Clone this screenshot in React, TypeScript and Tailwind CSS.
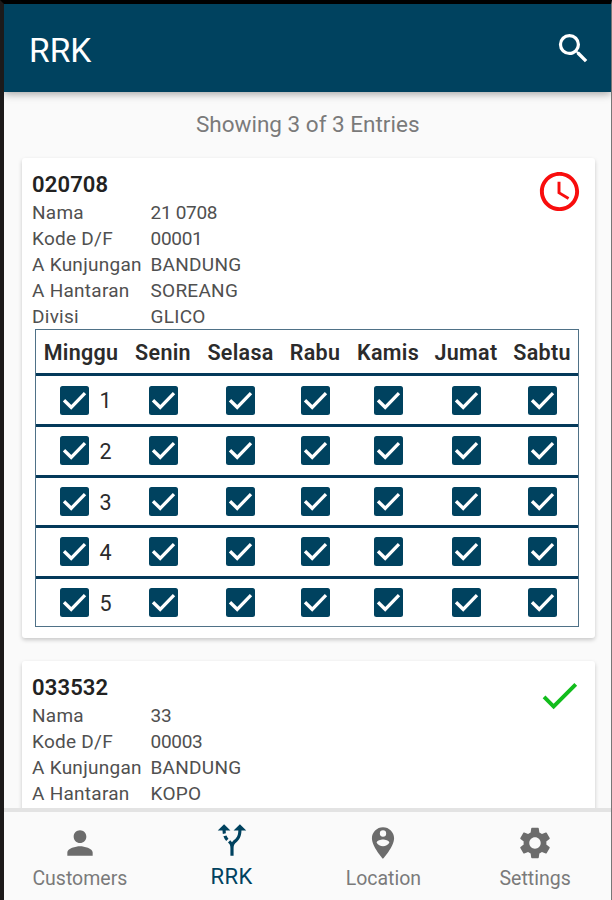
import {
  MdAccessTime,
  MdAltRoute,
  MdCheck,
  MdPerson,
  MdPersonPinCircle,
  MdSearch,
  MdSettings,
} from "react-icons/md";

const days = ["Senin", "Selasa", "Rabu", "Kamis", "Jumat", "Sabtu"];
const weeks = [1, 2, 3, 4, 5];

interface Customer {
  code: string;
  status: "pending" | "done";
  fields: [string, string][];
}

const customers: Customer[] = [
  {
    code: "020708",
    status: "pending",
    fields: [
      ["Nama", "21 0708"],
      ["Kode D/F", "00001"],
      ["A Kunjungan", "BANDUNG"],
      ["A Hantaran", "SOREANG"],
      ["Divisi", "GLICO"],
    ],
  },
  {
    code: "033532",
    status: "done",
    fields: [
      ["Nama", "33"],
      ["Kode D/F", "00003"],
      ["A Kunjungan", "BANDUNG"],
      ["A Hantaran", "KOPO"],
    ],
  },
];

const tabs = [
  { label: "Customers", icon: MdPerson },
  { label: "RRK", icon: MdAltRoute, active: true },
  { label: "Location", icon: MdPersonPinCircle },
  { label: "Settings", icon: MdSettings },
];

function Checkbox() {
  return (
    <svg viewBox="0 0 29 29" className="size-[29px] shrink-0">
      <rect width="29" height="29" rx="2.5" fill="#00425f" />
      <path d="M4 14.3l7.2 7L25 7.2" fill="none" stroke="#fff" strokeWidth="3.3" />
    </svg>
  );
}

function Schedule() {
  return (
    <div className="ml-[13.5px] w-[544px] border border-[#4f7187] text-[#2b2b2b]">
      <div className="grid h-[43px] grid-cols-[90px_74px_81px_68px_78px_78px_74px] items-center pt-[3px] text-center text-[21.5px] font-semibold tracking-[0.3px]">
        <span>Minggu</span>
        {days.map((day) => (
          <span key={day}>{day}</span>
        ))}
      </div>
      {weeks.map((week) => (
        <div
          key={week}
          className="grid h-[50.6px] grid-cols-[90px_74px_81px_68px_78px_78px_74px] items-center justify-items-center border-t-[3px] border-[#04395a]"
        >
          <div className="flex w-full items-center pl-[23.5px]">
            <Checkbox />
            <span className="mt-[2px] ml-[11px] text-[21.5px] leading-none">{week}</span>
          </div>
          {days.map((day) => (
            <Checkbox key={day} />
          ))}
        </div>
      ))}
    </div>
  );
}

function CustomerCard({ customer }: { customer: Customer }) {
  return (
    <section className="relative w-[573px] rounded-[3px] bg-white pt-[13px] pb-[10.5px] shadow-[0_2px_4px_rgba(0,0,0,0.2)]">
      <h2 className="pl-[10.5px] text-[22px] leading-[27px] font-semibold tracking-[0.15px] text-[#222]">
        {customer.code}
      </h2>
      <dl className="pt-[1.7px] pl-[10.5px] text-[19px] leading-[26px] tracking-[0.27px] text-[#505050]">
        {customer.fields.map(([label, value]) => (
          <div key={label} className="flex">
            <dt className="w-[118.5px] whitespace-nowrap">{label}</dt>
            <dd className={/^\d/.test(value) ? "tracking-[-0.3px]" : ""}>{value}</dd>
          </div>
        ))}
      </dl>
      {customer.status === "pending" ? (
        <>
          <MdAccessTime className="absolute top-[10px] right-[12px] size-[47px] text-[#f80d0d]" />
          <div className="-mt-[0.7px]">
            <Schedule />
          </div>
        </>
      ) : (
        <MdCheck className="absolute top-[11px] right-[12px] size-[47px] text-[#12bd1c]" />
      )}
    </section>
  );
}

export default function App() {
  return (
    <div className="flex h-[900px] w-[612px] flex-col overflow-hidden border-t-4 border-r border-l-4 border-t-black border-r-[#777] border-l-[#1c1a1a] bg-[#fafafa] font-[Roboto,sans-serif]">
      <header className="z-10 flex h-[88px] shrink-0 items-center justify-between bg-[#00425f] pr-[18px] pl-[25px] text-white shadow-[0_2px_8px_rgba(0,0,0,0.35)]">
        <h1 className="pt-[5px] text-[33.5px] leading-none">RRK</h1>
        <MdSearch className="size-[39px]" />
      </header>

      <main className="min-h-0 flex-1 overflow-hidden pl-[17.5px]">
        <p className="mr-[17px] pt-[19px] pb-[20.4px] text-center text-[22.5px] leading-[27px] text-[#7a7a7a]">
          Showing 3 of 3 Entries
        </p>
        <div className="flex flex-col gap-[23px]">
          {customers.map((customer) => (
            <CustomerCard key={customer.code} customer={customer} />
          ))}
        </div>
      </main>

      <nav className="z-10 grid h-[92px] shrink-0 grid-cols-4 border-t-4 border-[#e3e3e3] bg-[#fafafa]">
        {tabs.map(({ label, icon: Icon, active }) => (
          <div
            key={label}
            className={
              active
                ? "flex flex-col items-center pt-[9px] text-[22px] tracking-[0.5px] text-[#00425f]"
                : "flex flex-col items-center pt-[12px] text-[19.5px] text-[#7a7a7a]"
            }
          >
            <Icon className={active ? "size-[38px]" : "size-[38px] text-[#6c6c6c]"} />
            <span className={active ? "mt-[6px] leading-[24px]" : "mt-[5px] leading-[24px]"}>
              {label}
            </span>
          </div>
        ))}
      </nav>
    </div>
  );
}
